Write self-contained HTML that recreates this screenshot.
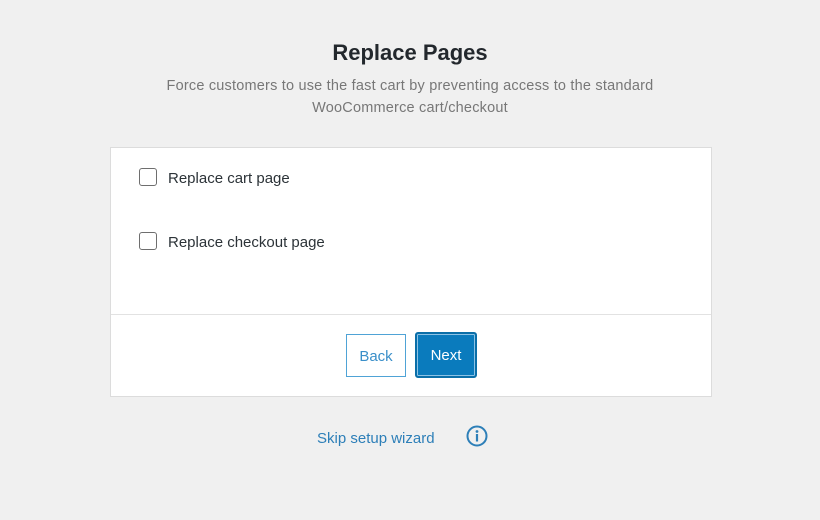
<!DOCTYPE html>
<html><head><style>
body{margin:0;width:820px;height:520px;background:#f0f0f0;font-family:"Liberation Sans",sans-serif;position:relative;overflow:hidden}
.t{position:absolute;left:0;width:820px;text-align:center}
h1{margin:0;font-size:22px;font-weight:bold;color:#23282d}
.sub{font-size:14.5px;color:#777;line-height:22px;top:75px;letter-spacing:0.2px}
.card{position:absolute;left:110px;top:147px;width:600px;height:248px;background:#fff;border:1px solid #dcdcdc}
.div{position:absolute;left:0;right:0;top:166px;border-top:1px solid #e2e2e2}
.cb{position:absolute;left:28px;width:16px;height:16px;border:1.5px solid #6e6e6e;border-radius:3px}
.lb{position:absolute;left:57px;font-size:15px;color:#2c3338}
.back{position:absolute;left:235px;top:186px;width:58px;height:41px;border:1.5px solid #4fa3d6;box-sizing:content-box;color:#3a8fc9;font-size:15px;line-height:43px;text-align:center}
.next{position:absolute;left:304px;top:184px;width:58px;height:42px;background:#0a7bbd;border:2px solid #0a6ea8;box-shadow:inset 0 0 0 1px #8cc3e6;border-radius:3px;color:#fff;font-size:15px;line-height:44px;text-align:center}
.skip{position:absolute;left:317px;top:430px;font-size:15px;color:#2d7fb8}
</style></head><body>
<div class="t" style="top:40px"><h1>Replace Pages</h1></div>
<div class="t sub">Force customers to use the fast cart by preventing access to the standard<br>WooCommerce cart/checkout</div>
<div class="card">
<div class="cb" style="top:20px"></div><div class="lb" style="top:22px">Replace cart page</div>
<div class="cb" style="top:84px"></div><div class="lb" style="top:86px">Replace checkout page</div>
<div class="div"></div>
<div class="back">Back</div>
<div class="next">Next</div>
</div>
<div class="skip">Skip setup wizard</div>
<svg style="position:absolute;left:466px;top:425px" width="22" height="22" viewBox="0 0 22 22"><circle cx="11" cy="11" r="9.5" fill="none" stroke="#2d7fb8" stroke-width="2"/><circle cx="11" cy="6.5" r="1.4" fill="#2d7fb8"/><rect x="9.9" y="9" width="2.2" height="7.5" fill="#2d7fb8"/></svg>
</body></html>
